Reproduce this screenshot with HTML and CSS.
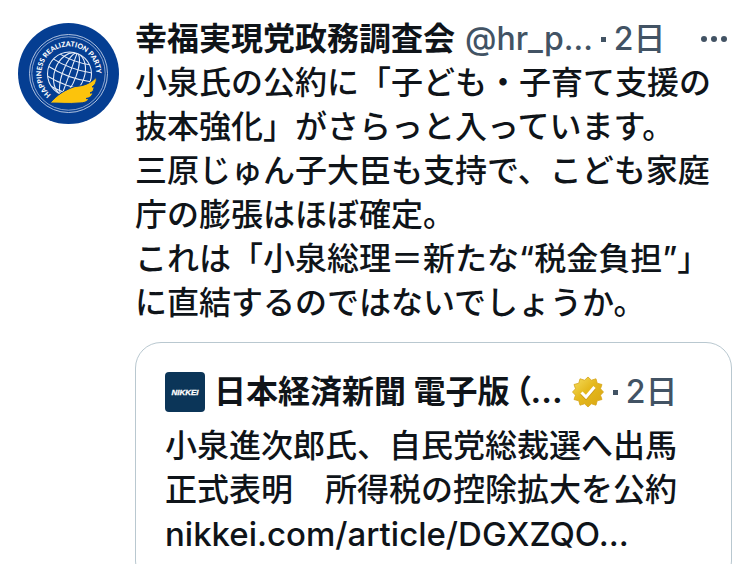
FILE: index.html
```html
<!DOCTYPE html>
<html lang="ja">
<head>
    <meta charset="UTF-8">
    <meta name="viewport" content="width=device-width, initial-scale=1.0">
    <title>幸福実現党政務調査会</title>
    <link rel="stylesheet" href="styles.css">
</head>
<body>
    <article class="post">
        <a class="avatar" href="#" aria-label="幸福実現党政務調査会">
            <svg viewBox="0 0 101 101">
                <defs>
                    <path id="ring" d="M33 71.8A27.5 27.5 0 1 1 76 62"/>
                    <clipPath id="globe"><circle cx="51.5" cy="51" r="22"/></clipPath>
                </defs>
                <circle cx="50.5" cy="50.5" r="50.5" fill="#053e92"/>
                <g fill="none" stroke="#c3d0e8">
                    <circle cx="50.5" cy="50.5" r="39" stroke-width=".9"/>
                    <circle cx="50.5" cy="50.5" r="36.7" stroke-width=".7"/>
                </g>
                <g fill="none" stroke="#e6ecf7" stroke-width="1.1">
                    <circle cx="51.5" cy="51" r="22"/>
                    <g clip-path="url(#globe)">
                        <g transform="rotate(20 51.5 51)">
                            <ellipse cx="51.5" cy="51" rx="7" ry="22"/>
                            <ellipse cx="51.5" cy="51" rx="15" ry="22"/>
                            <path d="M51.5 29V73M29 51Q51.5 56 74 51M29 42Q51.5 47 74 42M33 35Q51.5 39 70 35M29 60Q51.5 65 74 60M34 68Q51.5 72 69 68"/>
                        </g>
                    </g>
                </g>
                <path fill="#fcc30c" stroke="#053e92" d="M32 80C40 71 47 67 57 63.5C66 63 73 60 78 54.5C79 59 77 62 74 64L76 63.5C76 67 75 69 72 70L75 70C74 73 72 75 68 75.5L71 76C69 79 66 80 61 80C51 81 41 80 32 80Z"/>
                <text class="ring-text"><textPath href="#ring">HAPPINESS REALIZATION PARTY</textPath></text>
            </svg>
        </a>
        <div class="content">
            <header class="post-header">
                <a class="name" href="#">幸福実現党政務調査会</a>
                <span class="meta"><a href="#">@hr_p...</a><span class="dot"></span><time>2日</time></span>
                <button class="more" aria-label="もっと見る">
                    <svg viewBox="0 0 28 8"><circle cx="4" cy="4" r="3"/><circle cx="14" cy="4" r="3"/><circle cx="24" cy="4" r="3"/></svg>
                </button>
            </header>
            <p class="text">小泉氏の公約に「子ども・子育て支援の抜本強化」がさらっと入っています。<br>三原じゅん子大臣も支持で、こども家庭庁の膨張はほぼ確定。<br>これは「小泉総理＝新たな“税金負担”」に直結するのではないでしょうか。</p>

            <section class="quote">
                <header class="quote-header">
                    <svg class="quote-avatar" viewBox="0 0 40 40">
                        <rect width="40" height="40" rx="4" fill="#0b3558"/>
                        <text x="20" y="23" text-anchor="middle">NIKKEI</text>
                    </svg>
                    <a class="name" href="#">日本経済新聞 電子版<span class="paren">（</span>...</a>
                    <svg class="badge" viewBox="0 0 32 32">
                        <defs>
                            <linearGradient id="gold" x1="0" y1="0" x2="1" y2="1">
                                <stop offset="0" stop-color="#f5df62"/>
                                <stop offset=".45" stop-color="#e5b91d"/>
                                <stop offset="1" stop-color="#d8a512"/>
                            </linearGradient>
                        </defs>
                        <path fill="url(#gold)" stroke="#d5a51b" stroke-width=".8" d="M16 1L19.4 4.2L24 2.8L25.2 7.2L30 8.5L28.5 12.8L31.5 16L28.5 19.2L30 23.5L25.2 24.8L24 29.2L19.4 27.8L16 31L12.6 27.8L8 29.2L6.8 24.8L2 23.5L3.5 19.2L.5 16L3.5 12.8L2 8.5L6.8 7.2L8 2.8L12.6 4.2Z"/>
                        <path fill="none" stroke="#c4921a" stroke-width="3" d="M9.5 17.5L14 22L22.5 12"/>
                        <path fill="none" stroke="#fff" stroke-width="3" d="M9.5 16.5L14 21L22.5 11"/>
                    </svg>
                    <span class="meta"><span class="dot"></span><time>2日</time></span>
                </header>
                <p class="text">小泉進次郎氏、自民党総裁選へ出馬正式表明　所得税の控除拡大を公約<br><a class="link" href="#">nikkei.com/article/DGXZQO...</a></p>
            </section>
        </div>
    </article>
</body>
</html>
```

FILE: styles.css
```css
body {
    margin: 0;
    background-color: #fff;
    color: #0f1419;
    font-family: Inter, "Noto Sans CJK JP Medium", "Noto Sans CJK JP", sans-serif;
    font-size: 32px;
    font-weight: 500;
    line-height: 44px;
}
a {
    color: inherit;
    text-decoration: none;
}
.post {
    display: flex;
    gap: 16px;
    padding: 17px 18px;
}
.avatar {
    flex: none;
    width: 101px;
    padding-top: 6px;
}
.avatar svg {
    display: block;
}
.ring-text {
    font-family: Lato, sans-serif;
    font-size: 7px;
    font-weight: 900;
    fill: #fff;
}
.content {
    flex: 1;
    min-width: 0;
}
.post-header, .quote-header {
    display: flex;
    align-items: center;
    white-space: nowrap;
}
.post-header {
    gap: 10px;
}
.name {
    font-family: Inter, "Noto Sans CJK JP", sans-serif;
    font-weight: 700;
}
.meta {
    display: flex;
    align-items: center;
    gap: 8px;
    color: #425364;
}
.dot {
    width: 5px;
    height: 5px;
    background-color: #425364;
}
.more {
    display: flex;
    margin-left: auto;
    padding: 4px;
    border: none;
    background: none;
    cursor: pointer;
}
.more svg {
    width: 28px;
    fill: #425364;
}
.text {
    margin: 0;
    line-break: strict;
}
.link {
    font-size: 33px;
}
.quote {
    margin-top: 17px;
    padding: 29px;
    border: 1px solid #b9c8d0;
    border-radius: 26px;
}
.quote-header {
    gap: 9px;
    height: 40px;
    margin-bottom: 12px;
}
.quote-avatar {
    width: 40px;
    height: 40px;
}
.quote-avatar text {
    font-family: "Liberation Sans", sans-serif;
    font-size: 8px;
    font-style: italic;
    font-weight: 700;
    fill: #fff;
    stroke: #fff;
    stroke-width: .3;
}
.paren {
    margin-left: 5px;
    font-feature-settings: "palt";
}
.badge {
    width: 32px;
    height: 32px;
}
```
